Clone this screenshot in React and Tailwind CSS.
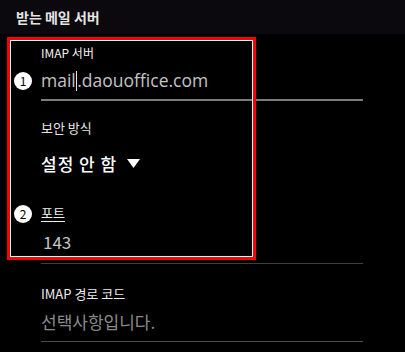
const Badge = ({ n, top }) => (
  <div
    className="absolute left-[14px] w-[18px] h-[18px] rounded-full bg-white text-black flex items-center justify-center text-[12px] leading-none"
    style={{ top }}
  >
    {n}
  </div>
);

export default function App() {
  return (
    <div
      className="relative w-[405px] h-[352px] bg-black overflow-hidden"
      style={{ fontFamily: '"Noto Sans CJK KR", "Noto Sans", sans-serif' }}
    >
      {/* Header */}
      <div className="h-[34px] bg-[#0b090d] flex items-center pl-[16px]">
        <span className="text-[14px] font-bold text-[#e4e4e4] leading-none">받는 메일 서버</span>
      </div>

      {/* Form */}
      <div className="pl-[41px] w-[363px] flex flex-col">
        <div className="mt-[11px] text-[12px] leading-[16px] text-[#f0f0f0]">IMAP 서버</div>
        <div className="mt-[8px] h-[24px] flex items-center text-[17.5px] text-[#c4c4c4] leading-none" style={{ fontFamily: '"Open Sans", sans-serif' }}>
          <span>mail</span>
          <span className="w-[1.5px] h-[20px] bg-[#e8e8e8]" />
          <span>.daouoffice.com</span>
        </div>
        <div className="mt-[6px] h-[2px] bg-[#7c7c7c]" />

        <div className="mt-[18px] text-[13px] leading-[18px] text-[#e6e6e6]">보안 방식</div>
        <div className="mt-[14px] h-[24px] flex items-center gap-[10px]">
          <span className="text-[17px] text-white leading-none tracking-[1px] font-medium">설정 안 함</span>
          <svg width="13" height="9" viewBox="0 0 13 9">
            <polygon points="0,0 13,0 6.5,9" fill="#ffffff" />
          </svg>
        </div>

        <div className="mt-[29px] text-[13px] leading-[18px] text-[#f0f0f0] underline underline-offset-[3px]">포트</div>
        <div className="mt-[7px] h-[24px] pl-[2px] flex items-center text-[17px] text-[#c4c4c4] leading-none">143</div>
        <div className="mt-[10px] h-[1px] bg-[#3e3e3e]" />

        <div className="mt-[21px] text-[13px] leading-[18px] text-[#ececec]">IMAP 경로 코드</div>
        <div className="mt-[6px] h-[24px] flex items-center text-[17px] text-[#8a8a8a] leading-none">선택사항입니다.</div>
        <div className="mt-[8px] h-[1px] bg-[#4a4a4a]" />
      </div>

      {/* Annotation overlay */}
      <div className="absolute left-[7px] top-[37px] w-[249px] h-[223px] border-[3px] border-[#ff0000] pointer-events-none">
        <div className="w-full h-full border border-white" />
      </div>
      <Badge n="1" top={72} />
      <Badge n="2" top={205} />
    </div>
  );
}
